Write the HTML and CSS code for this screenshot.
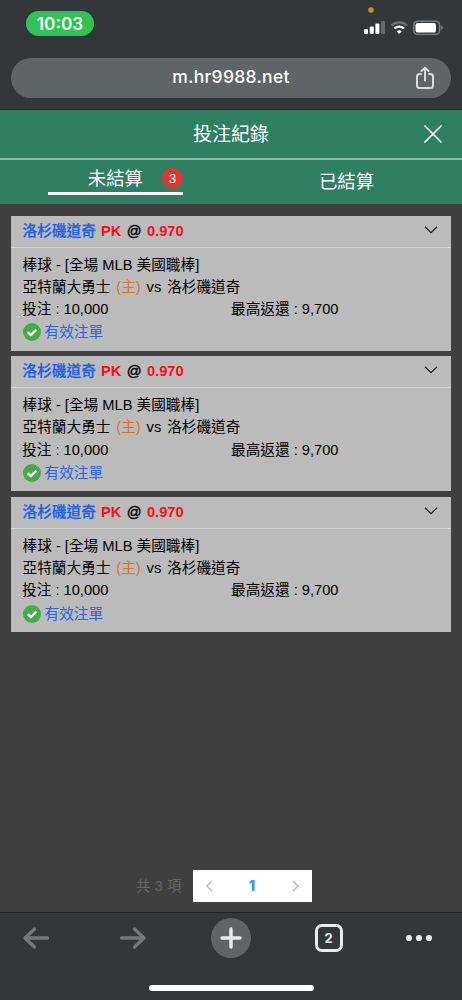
FILE: index.html
```html
<!DOCTYPE html>
<html lang="zh-Hant">
<head>
<meta charset="utf-8">
<meta name="viewport" content="width=device-width, initial-scale=1">
<title>投注紀錄</title>
<link rel="stylesheet" href="styles.css">
</head>
<body>
<div class="screen">
  <header class="browser">
    <div class="status">
      <span class="clock">10:03</span>
      <svg class="signals" width="88" height="32" viewBox="0 0 88 32">
        <circle cx="11" cy="4" r="2.800" fill="#c58a35"/>
        <g fill="#fff">
          <rect x="4" y="23" width="4" height="5" rx="1"/>
          <rect x="9.800" y="20.500" width="4" height="7.500" rx="1"/>
          <rect x="15.400" y="17.500" width="4" height="10.500" rx="1"/>
        </g>
        <rect x="21" y="15" width="4" height="13" rx="1" fill="#66696c"/>
        <g fill="none" stroke-width="2.400">
          <path d="M31.500 19.500a11 11 0 0 1 15.400 0" stroke="#707376"/>
          <path d="M34.400 22.500a7 7 0 0 1 9.600 0" stroke="#fff"/>
        </g>
        <path d="M36.700 25.300a3.800 3.800 0 0 1 5 0L39.200 28z" fill="#fff"/>
        <rect x="53.700" y="15.200" width="26" height="13.200" rx="3.800" fill="none" stroke="#7d8082" stroke-width="1.400"/>
        <rect x="55.500" y="17" width="20.500" height="9.600" rx="2.200" fill="#fff"/>
        <path d="M81.300 19.500q1.600.6 1.600 2.300t-1.600 2.300z" fill="#7d8082"/>
      </svg>
    </div>
    <div class="address">
      <span class="url">m.hr9988.net</span>
      <svg class="share" width="22" height="24" viewBox="0 0 22 24" fill="none" stroke="#d9dbdc" stroke-width="2" stroke-linecap="round" stroke-linejoin="round">
        <path d="M7 8H5.500Q3 8 3 10.500v9Q3 22 5.500 22h11q2.500 0 2.500-2.500v-9Q19 8 16.500 8H15M11 14.500V2M7.500 5 11 1.700 14.500 5"/>
      </svg>
    </div>
  </header>

  <div class="titlebar">
    <h1>投注紀錄</h1>
    <svg class="close" width="18" height="18" viewBox="0 0 18 18" fill="none" stroke="#fff" stroke-width="1.700" stroke-linecap="round"><path d="M1 1l16 16M17 1 1 17"/></svg>
  </div>
  <nav class="tabs">
    <div class="tab"><div class="active"><span>未結算</span><span class="badge">3</span></div></div>
    <div class="tab settled">已結算</div>
  </nav>

  <main class="content">
    <section class="card">
      <div class="card-head"><span><b class="team">洛杉磯道奇</b> <b class="odds">PK</b> <span class="at">@</span> <b class="odds">0.970</b></span>
        <svg width="14" height="8" viewBox="0 0 14 8" fill="none" stroke="#222" stroke-width="1.300"><path d="M1 .8l6 5.900L13 .8"/></svg></div>
      <div class="card-body">
        <p>棒球 - [全場 MLB 美國職棒]</p>
        <p class="match">亞特蘭大勇士 <span class="home">(主)</span> vs 洛杉磯道奇</p>
        <p class="money"><span>投注 : 10,000</span><span>最高返還 : 9,700</span></p>
        <p class="valid"><svg width="18" height="18" viewBox="0 0 18 18"><circle cx="9" cy="9" r="9" fill="#45ab4b"/><path d="M4.800 9.200l3 2.900 5.600-5.500" fill="none" stroke="#fff" stroke-width="2.300"/></svg><span>有效注單</span></p>
      </div>
    </section>
    <section class="card">
      <div class="card-head"><span><b class="team">洛杉磯道奇</b> <b class="odds">PK</b> <span class="at">@</span> <b class="odds">0.970</b></span>
        <svg width="14" height="8" viewBox="0 0 14 8" fill="none" stroke="#222" stroke-width="1.300"><path d="M1 .8l6 5.900L13 .8"/></svg></div>
      <div class="card-body">
        <p>棒球 - [全場 MLB 美國職棒]</p>
        <p class="match">亞特蘭大勇士 <span class="home">(主)</span> vs 洛杉磯道奇</p>
        <p class="money"><span>投注 : 10,000</span><span>最高返還 : 9,700</span></p>
        <p class="valid"><svg width="18" height="18" viewBox="0 0 18 18"><circle cx="9" cy="9" r="9" fill="#45ab4b"/><path d="M4.800 9.200l3 2.900 5.600-5.500" fill="none" stroke="#fff" stroke-width="2.300"/></svg><span>有效注單</span></p>
      </div>
    </section>
    <section class="card">
      <div class="card-head"><span><b class="team">洛杉磯道奇</b> <b class="odds">PK</b> <span class="at">@</span> <b class="odds">0.970</b></span>
        <svg width="14" height="8" viewBox="0 0 14 8" fill="none" stroke="#222" stroke-width="1.300"><path d="M1 .8l6 5.900L13 .8"/></svg></div>
      <div class="card-body">
        <p>棒球 - [全場 MLB 美國職棒]</p>
        <p class="match">亞特蘭大勇士 <span class="home">(主)</span> vs 洛杉磯道奇</p>
        <p class="money"><span>投注 : 10,000</span><span>最高返還 : 9,700</span></p>
        <p class="valid"><svg width="18" height="18" viewBox="0 0 18 18"><circle cx="9" cy="9" r="9" fill="#45ab4b"/><path d="M4.800 9.200l3 2.900 5.600-5.500" fill="none" stroke="#fff" stroke-width="2.300"/></svg><span>有效注單</span></p>
      </div>
    </section>
    <div class="pager">
      <span class="total">共 3 項</span>
      <div class="pages">
        <svg width="8" height="12" viewBox="0 0 8 12" fill="none" stroke="#bcbcbc" stroke-width="1.600"><path d="M7 1 2 6l5 5"/></svg>
        <b>1</b>
        <svg width="8" height="12" viewBox="0 0 8 12" fill="none" stroke="#bcbcbc" stroke-width="1.600"><path d="M1 1l5 5-5 5"/></svg>
      </div>
    </div>
  </main>

  <footer class="toolbar">
    <div class="tools">
      <svg width="28" height="24" viewBox="0 0 28 24" fill="none" stroke="#75787b" stroke-width="3.300" stroke-linecap="round" stroke-linejoin="round"><path d="M25.500 12H3M12.500 3 3 12l9.500 9"/></svg>
      <svg width="28" height="24" viewBox="0 0 28 24" fill="none" stroke="#75787b" stroke-width="3.300" stroke-linecap="round" stroke-linejoin="round"><path d="M2.500 12H25M15.500 3 25 12l-9.500 9"/></svg>
      <span class="add"><svg width="22" height="22" viewBox="0 0 22 22" stroke="#e8eaed" stroke-width="3.400" stroke-linecap="round"><path d="M11 2v18M2 11h18"/></svg></span>
      <span class="count">2</span>
      <svg width="28" height="8" viewBox="0 0 28 8" fill="#e8eaed"><circle cx="4" cy="4" r="3.100"/><circle cx="14" cy="4" r="3.100"/><circle cx="24" cy="4" r="3.100"/></svg>
    </div>
    <div class="home-bar"></div>
  </footer>
</div>
</body>
</html>
```
FILE: styles.css
```css
* { box-sizing: border-box; }
body { margin: 0; background: #404040; font-family: "Liberation Sans", "Noto Sans CJK TC", sans-serif; }
h1, p { margin: 0; }
svg { display: block; flex: none; }
.screen { width: 462px; height: 1000px; display: flex; flex-direction: column; overflow: hidden; }

.browser { height: 110px; flex: none; padding: 0 11px; background: #34373a; border-bottom: 1px solid #14332a; font-family: Inter, sans-serif; }
.status { height: 58px; display: flex; justify-content: space-between; align-items: flex-start; padding: 6px 3px 0 15px; }
.clock { width: 68px; height: 25px; margin-top: 5px; border-radius: 13px; background: #30c254; color: #fff; font-size: 17.300px; font-weight: 600; line-height: 25px; text-align: center; }
.address { height: 40px; border-radius: 20px; background: #5f6467; display: grid; grid-template-columns: 60px 1fr 60px; align-items: center; }
.url { grid-column: 2; text-align: center; color: #fff; font-size: 17.500px; font-weight: 500; line-height: 37px; padding-bottom: 3px; letter-spacing: .3px; }
.share { justify-self: end; margin-right: 15px; }

.titlebar { height: 50px; flex: none; padding: 0 20px; background: #2f8062; border-bottom: 2px solid #8db8a6; display: grid; grid-template-columns: 40px 1fr 40px; align-items: center; }
.titlebar h1 { grid-column: 2; text-align: center; color: #fff; font-size: 19px; font-weight: 400; line-height: 46px; padding-bottom: 2px; font-family: "Noto Sans CJK TC", sans-serif; }
.close { justify-self: end; }
.tabs { height: 44px; flex: none; background: #2f8062; display: grid; grid-template-columns: 1fr 1fr; color: #fff; font-size: 18.400px; font-family: "Noto Sans CJK TC", sans-serif; }
.active { width: 135px; height: 35px; margin-left: 48px; border-bottom: 3px solid #fff; display: flex; align-items: center; justify-content: flex-end; gap: 19px; line-height: 32px; }
.active > span:first-child { padding-top: 1px; }
.badge { width: 21px; height: 21px; margin-top: 4px; border-radius: 50%; background: #db3737; text-align: center; font: 13.500px/21px "Liberation Sans", sans-serif; }
.settled { text-align: center; line-height: 40px; }

.content { flex: 1; padding: 11.500px 11px 10px; background: #404040; display: flex; flex-direction: column; gap: 5.600px; }
.card { height: 135px; background: #bbb; color: #000; font-size: 14.670px; flex: none; }
.card-head { height: 32px; padding: 0 13px 1px 11.500px; border-bottom: 1px solid #d4d4d4; display: flex; justify-content: space-between; align-items: center; line-height: 30px; word-spacing: 1.200px; }
.card-head svg { margin-top: -2px; }
.team { color: #1c5fe8; font-weight: 500; -webkit-text-stroke: .25px #1c5fe8; }
.odds { color: #fa0f1b; }
.at { -webkit-text-stroke: .4px #000; }
.card-body { padding: 6px 11.500px 0; }
.card-body p { height: 22.300px; line-height: 22.300px; white-space: nowrap; }
.match { word-spacing: 1.800px; }
.home { color: #dc7428; }
.money { display: grid; grid-template-columns: 209px 1fr; margin-left: -.500px; }
.card-body .valid { height: 24px; line-height: 24px; display: flex; align-items: center; gap: 4px; color: #2666e6; }

.pager { margin-top: auto; height: 32px; display: flex; align-items: center; gap: 11px; padding-left: 125px; }
.total { width: 45.500px; color: #666; font-size: 14.300px; white-space: nowrap; letter-spacing: .2px; line-height: 24px; padding-bottom: 1px; }
.pages { width: 119px; height: 32px; padding: 0 12px; background: #fff; display: flex; align-items: center; justify-content: space-between; color: #409eda; font: 700 14px/32px Inter, sans-serif; }

.toolbar { height: 88px; flex: none; border-top: 1px solid #202224; background: #34373a; display: flex; flex-direction: column; align-items: center; }
.tools { width: 100%; height: 50px; display: grid; grid-template-columns: 71px 124px 72px 123px 57px; justify-items: center; align-items: center; }
.add { width: 40px; height: 40px; border-radius: 50%; background: #5f6467; display: grid; place-items: center; }
.count { width: 28px; height: 28px; border: 3px solid #e8eaed; border-radius: 7px; color: #e8eaed; text-align: center; font: 700 13px/22px Inter, sans-serif; }
.home-bar { width: 165px; height: 6px; margin-top: 22px; border-radius: 3px; background: #fff; }
```
